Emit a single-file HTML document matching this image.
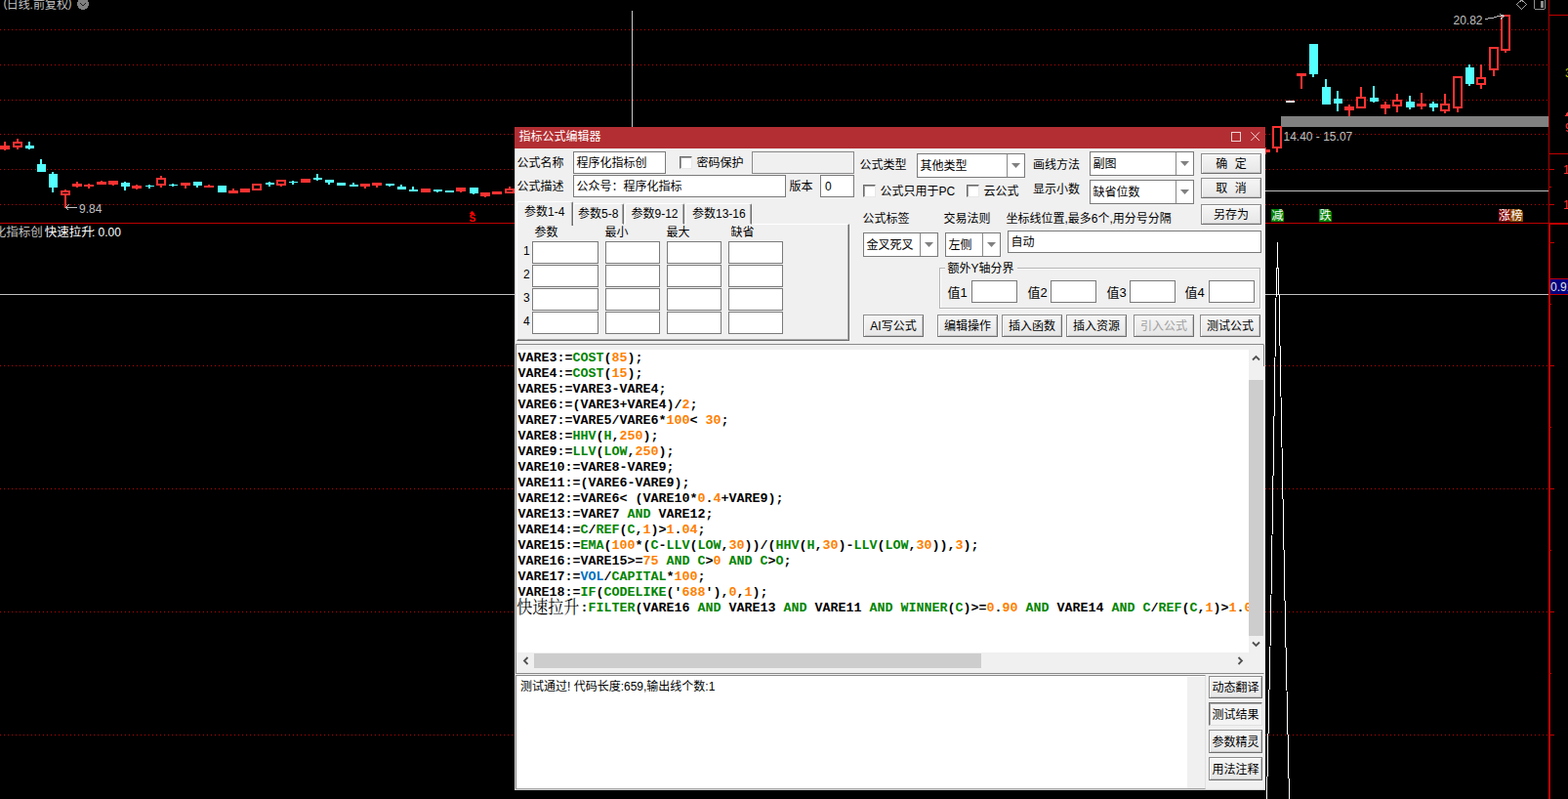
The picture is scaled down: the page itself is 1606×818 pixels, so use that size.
<!DOCTYPE html>
<html><head><meta charset="utf-8"><title>chart</title>
<style>
html,body{margin:0;padding:0;background:#000;}
body{width:1606px;height:818px;overflow:hidden;position:relative;font-family:"Liberation Sans","Noto Sans CJK SC",sans-serif;font-size:12px;color:#000;}
#chart{position:absolute;left:0;top:0;}
#chart text{font-family:"Liberation Sans","Noto Sans CJK SC",sans-serif;}
#dlg{position:absolute;left:527px;top:130px;width:769px;height:679px;background:#f0f0f0;overflow:hidden;box-shadow:inset 1px 0 0 #d0d0d0, inset 0 -1px 0 #d0d0d0;}
#dlg>div,.abs{position:absolute;box-sizing:border-box;}
.l{position:absolute;white-space:nowrap;line-height:12px;font-size:12px;height:12px;}
.g{display:inline-block;width:12px;height:12px;vertical-align:top;fill:currentColor;stroke:currentColor;stroke-width:28;overflow:visible;}
.title{background:#b22e32;}
.in{background:#fff;border:1px solid #7a7a7a;}
.in.dis{background:#f0f0f0;border-color:#8a8a8a;}
.cdiv{position:absolute;top:0;bottom:0;width:1px;background:#8a8a8a;}
.arr{position:absolute;}
.chk{background:#fff;border:1px solid;border-color:#6a6a6a #e8e8e8 #e8e8e8 #6a6a6a;box-shadow:inset 1px 1px 0 #a0a0a0;}
.btn{background:linear-gradient(#f6f6f6,#e6e6e6);border:1px solid;border-color:#8c8c8c #6e6e6e #6e6e6e #8c8c8c;box-shadow:inset 1px 1px 0 #fff,inset -1px -1px 0 #c8c8c8;}
.btn .bl{position:absolute;left:0;right:0;text-align:center;white-space:nowrap;line-height:12px;height:12px;font-size:12px;}
.btn.disb{color:#a0a0a0;}
.btn.pressed{background:#f4f4f4;border-color:#6e6e6e #e0e0e0 #e0e0e0 #6e6e6e;box-shadow:inset 1px 1px 0 #a8a8a8;}
.panel{background:#f0f0f0;border:1px solid;border-color:#fff #6e6e6e #6e6e6e #fff;box-shadow:inset -1px -1px 0 #a8a8a8;}
.tab{background:#f0f0f0;border:1px solid;border-color:#fff #6e6e6e transparent #fff;border-radius:2px 2px 0 0;box-shadow:inset -1px 0 0 #a8a8a8;}
.tab.act{border-bottom:none;z-index:2;}
.grp{border:1px solid #b4b4b4;box-shadow:inset 1px 1px 0 #fff, 1px 1px 0 #fff;}
.edwrap{background:#f0f0f0;border:1px solid;border-color:#8a8a8a #f8f8f8 #8a8a8a #8a8a8a;}
.edit{background:#fff;overflow:hidden;font-family:"Liberation Mono",monospace;font-weight:bold;font-size:13.3333px;letter-spacing:0;}
.cl{height:16px;line-height:16px;white-space:pre;padding-left:1.5px;position:relative;top:0.6px;}
.cl .g{color:#008400}.cl .o{color:#ff8000}.cl .b{color:#0070c0}
.cl span.g,.cl span.o,.cl span.b{display:inline;width:auto;height:auto;vertical-align:baseline;}
.z{letter-spacing:0;display:inline-block;height:16px;vertical-align:top;transform-origin:left bottom;transform:translate(-1.2px,0px) scale(1,1.12);font-family:"Liberation Serif","Noto Serif CJK SC",serif;font-weight:normal;font-size:16px;line-height:16px;}
.sb{background:#f0f0f0;}
.thumb{background:#cdcdcd;}
.outp{background:#fff;border:1px solid;border-color:#8a8a8a #e0e0e0 #a8a8a8 #8a8a8a;}

</style></head>
<body>
<svg id="chart" width="1606" height="818" viewBox="0 0 1606 818" shape-rendering="crispEdges" font-family="Liberation Sans, sans-serif">
<line x1="0" y1="30.5" x2="1586" y2="30.5" stroke="#c00000" stroke-width="1" stroke-dasharray="1 3"/>
<line x1="0" y1="66.5" x2="1586" y2="66.5" stroke="#c00000" stroke-width="1" stroke-dasharray="1 3"/>
<line x1="0" y1="102.5" x2="1586" y2="102.5" stroke="#c00000" stroke-width="1" stroke-dasharray="1 3"/>
<line x1="0" y1="137.5" x2="1586" y2="137.5" stroke="#c00000" stroke-width="1" stroke-dasharray="1 3"/>
<line x1="0" y1="173.5" x2="1586" y2="173.5" stroke="#c00000" stroke-width="1" stroke-dasharray="1 3"/>
<line x1="0" y1="209.5" x2="1586" y2="209.5" stroke="#c00000" stroke-width="1" stroke-dasharray="1 3"/>
<line x1="0" y1="374.5" x2="1586" y2="374.5" stroke="#c00000" stroke-width="1" stroke-dasharray="1 3"/>
<line x1="0" y1="500.5" x2="1586" y2="500.5" stroke="#c00000" stroke-width="1" stroke-dasharray="1 3"/>
<line x1="0" y1="626.5" x2="1586" y2="626.5" stroke="#c00000" stroke-width="1" stroke-dasharray="1 3"/>
<line x1="0" y1="752.5" x2="1586" y2="752.5" stroke="#c00000" stroke-width="1" stroke-dasharray="1 3"/>
<rect x="1312" y="119" width="274" height="11" fill="#808080"/>
<rect x="4" y="145" width="2" height="9" fill="#ff3232"/><rect x="0" y="149" width="10" height="4" fill="#ff3232"/>
<rect x="17" y="142" width="2" height="11" fill="#ff3232"/><rect x="13" y="145" width="10" height="6" fill="#ff3232"/><rect x="15" y="147" width="6" height="2" fill="#000"/>
<rect x="29" y="145" width="2" height="8" fill="#54ffff"/><rect x="26" y="149" width="9" height="3" fill="#54ffff"/>
<rect x="41" y="163" width="2" height="13" fill="#54ffff"/><rect x="38" y="168" width="9" height="8" fill="#54ffff"/>
<rect x="53" y="176" width="2" height="21" fill="#54ffff"/><rect x="50" y="178" width="9" height="14" fill="#54ffff"/>
<rect x="66" y="194" width="2" height="19" fill="#ff3232"/><rect x="62" y="195" width="10" height="5" fill="#ff3232"/><rect x="64" y="197" width="6" height="1" fill="#000"/>
<rect x="78" y="186" width="2" height="6" fill="#ff3232"/><rect x="74" y="188" width="10" height="3" fill="#ff3232"/>
<rect x="90" y="188" width="2" height="5" fill="#ff3232"/><rect x="86" y="189" width="10" height="2" fill="#ff3232"/>
<rect x="103" y="185" width="2" height="4" fill="#ff3232"/><rect x="99" y="186" width="10" height="3" fill="#ff3232"/>
<rect x="115" y="185" width="2" height="5" fill="#ff3232"/><rect x="111" y="185" width="10" height="4" fill="#ff3232"/>
<rect x="127" y="186" width="2" height="9" fill="#54ffff"/><rect x="124" y="187" width="9" height="4" fill="#54ffff"/>
<rect x="139" y="189" width="2" height="5" fill="#ff3232"/><rect x="135" y="190" width="10" height="3" fill="#ff3232"/>
<rect x="152" y="189" width="2" height="4" fill="#54ffff"/><rect x="149" y="190" width="9" height="1" fill="#54ffff"/>
<rect x="164" y="180" width="2" height="12" fill="#ff3232"/><rect x="160" y="182" width="10" height="8" fill="#ff3232"/><rect x="162" y="184" width="6" height="4" fill="#000"/>
<rect x="176" y="188" width="2" height="3" fill="#54ffff"/><rect x="173" y="189" width="9" height="1" fill="#54ffff"/>
<rect x="189" y="187" width="2" height="6" fill="#ff3232"/><rect x="185" y="187" width="10" height="3" fill="#ff3232"/>
<rect x="201" y="186" width="2" height="6" fill="#54ffff"/><rect x="198" y="186" width="9" height="4" fill="#54ffff"/>
<rect x="213" y="189" width="2" height="3" fill="#ff3232"/><rect x="209" y="190" width="10" height="2" fill="#ff3232"/>
<rect x="226" y="190" width="2" height="7" fill="#54ffff"/><rect x="223" y="190" width="9" height="7" fill="#54ffff"/>
<rect x="238" y="193" width="2" height="5" fill="#ff3232"/><rect x="234" y="195" width="10" height="3" fill="#ff3232"/>
<rect x="250" y="193" width="2" height="4" fill="#ff3232"/><rect x="246" y="193" width="10" height="4" fill="#ff3232"/>
<rect x="262" y="188" width="2" height="7" fill="#ff3232"/><rect x="258" y="188" width="10" height="7" fill="#ff3232"/><rect x="260" y="190" width="6" height="3" fill="#000"/>
<rect x="275" y="186" width="2" height="5" fill="#54ffff"/><rect x="272" y="187" width="9" height="2" fill="#54ffff"/>
<rect x="287" y="184" width="2" height="7" fill="#ff3232"/><rect x="283" y="184" width="10" height="6" fill="#ff3232"/><rect x="285" y="186" width="6" height="2" fill="#000"/>
<rect x="299" y="185" width="2" height="4" fill="#54ffff"/><rect x="296" y="186" width="9" height="1" fill="#54ffff"/>
<rect x="312" y="183" width="2" height="4" fill="#ff3232"/><rect x="308" y="183" width="10" height="4" fill="#ff3232"/>
<rect x="324" y="178" width="2" height="7" fill="#54ffff"/><rect x="321" y="182" width="9" height="2" fill="#54ffff"/>
<rect x="336" y="184" width="2" height="5" fill="#54ffff"/><rect x="333" y="184" width="9" height="3" fill="#54ffff"/>
<rect x="348" y="187" width="2" height="3" fill="#54ffff"/><rect x="345" y="187" width="9" height="3" fill="#54ffff"/>
<rect x="361" y="187" width="2" height="4" fill="#54ffff"/><rect x="358" y="189" width="9" height="2" fill="#54ffff"/>
<rect x="373" y="188" width="2" height="5" fill="#ff3232"/><rect x="369" y="188" width="10" height="3" fill="#ff3232"/>
<rect x="385" y="187" width="2" height="5" fill="#ff3232"/><rect x="381" y="187" width="10" height="3" fill="#ff3232"/>
<rect x="398" y="188" width="2" height="3" fill="#54ffff"/><rect x="395" y="188" width="9" height="2" fill="#54ffff"/>
<rect x="410" y="189" width="2" height="5" fill="#54ffff"/><rect x="407" y="191" width="9" height="3" fill="#54ffff"/>
<rect x="422" y="191" width="2" height="5" fill="#54ffff"/><rect x="419" y="194" width="9" height="2" fill="#54ffff"/>
<rect x="435" y="193" width="2" height="4" fill="#ff3232"/><rect x="431" y="193" width="10" height="4" fill="#ff3232"/>
<rect x="447" y="194" width="2" height="3" fill="#54ffff"/><rect x="444" y="194" width="9" height="2" fill="#54ffff"/>
<rect x="459" y="195" width="2" height="2" fill="#54ffff"/><rect x="456" y="195" width="9" height="2" fill="#54ffff"/>
<rect x="471" y="192" width="2" height="5" fill="#ff3232"/><rect x="467" y="192" width="10" height="4" fill="#ff3232"/>
<rect x="484" y="192" width="2" height="7" fill="#54ffff"/><rect x="481" y="192" width="9" height="6" fill="#54ffff"/>
<rect x="496" y="197" width="2" height="5" fill="#ff3232"/><rect x="492" y="197" width="10" height="4" fill="#ff3232"/>
<rect x="508" y="196" width="2" height="3" fill="#ff3232"/><rect x="504" y="196" width="10" height="3" fill="#ff3232"/>
<rect x="521" y="191" width="2" height="7" fill="#ff3232"/><rect x="517" y="193" width="10" height="5" fill="#ff3232"/><rect x="519" y="195" width="6" height="1" fill="#000"/>
<rect x="1295" y="151" width="2" height="7" fill="#ff3232"/><rect x="1291" y="153" width="10" height="3" fill="#ff3232"/>
<rect x="1307" y="129" width="2" height="27" fill="#ff3232"/><rect x="1303" y="129" width="10" height="23" fill="#ff3232"/><rect x="1305" y="131" width="6" height="19" fill="#000"/>
<rect x="1332" y="75" width="2" height="16" fill="#ff3232"/><rect x="1328" y="75" width="10" height="3" fill="#ff3232"/>
<rect x="1344" y="45" width="2" height="34" fill="#54ffff"/><rect x="1341" y="45" width="9" height="31" fill="#54ffff"/>
<rect x="1357" y="81" width="2" height="26" fill="#54ffff"/><rect x="1354" y="89" width="9" height="18" fill="#54ffff"/>
<rect x="1369" y="93" width="2" height="21" fill="#54ffff"/><rect x="1366" y="101" width="9" height="5" fill="#54ffff"/>
<rect x="1381" y="107" width="2" height="12" fill="#ff3232"/><rect x="1377" y="109" width="10" height="4" fill="#ff3232"/>
<rect x="1393" y="89" width="2" height="22" fill="#ff3232"/><rect x="1389" y="99" width="10" height="12" fill="#ff3232"/><rect x="1391" y="101" width="6" height="8" fill="#000"/>
<rect x="1406" y="88" width="2" height="17" fill="#54ffff"/><rect x="1403" y="100" width="9" height="4" fill="#54ffff"/>
<rect x="1418" y="104" width="2" height="13" fill="#ff3232"/><rect x="1414" y="107" width="10" height="4" fill="#ff3232"/>
<rect x="1430" y="96" width="2" height="19" fill="#ff3232"/><rect x="1426" y="102" width="10" height="7" fill="#ff3232"/><rect x="1428" y="104" width="6" height="3" fill="#000"/>
<rect x="1443" y="98" width="2" height="14" fill="#54ffff"/><rect x="1440" y="104" width="9" height="6" fill="#54ffff"/>
<rect x="1455" y="95" width="2" height="17" fill="#ff3232"/><rect x="1451" y="106" width="10" height="3" fill="#ff3232"/>
<rect x="1467" y="104" width="2" height="10" fill="#54ffff"/><rect x="1464" y="106" width="9" height="4" fill="#54ffff"/>
<rect x="1479" y="96" width="2" height="20" fill="#ff3232"/><rect x="1475" y="106" width="10" height="8" fill="#ff3232"/><rect x="1477" y="108" width="6" height="4" fill="#000"/>
<rect x="1492" y="78" width="2" height="37" fill="#ff3232"/><rect x="1488" y="78" width="10" height="33" fill="#ff3232"/><rect x="1490" y="80" width="6" height="29" fill="#000"/>
<rect x="1504" y="66" width="2" height="22" fill="#54ffff"/><rect x="1501" y="69" width="9" height="17" fill="#54ffff"/>
<rect x="1516" y="66" width="2" height="25" fill="#ff3232"/><rect x="1512" y="79" width="10" height="8" fill="#ff3232"/><rect x="1514" y="81" width="6" height="4" fill="#000"/>
<rect x="1529" y="48" width="2" height="30" fill="#ff3232"/><rect x="1525" y="48" width="10" height="24" fill="#ff3232"/><rect x="1527" y="50" width="6" height="20" fill="#000"/>
<rect x="1541" y="15" width="2" height="39" fill="#ff3232"/><rect x="1537" y="15" width="10" height="37" fill="#ff3232"/><rect x="1539" y="17" width="6" height="33" fill="#000"/>
<rect x="1317" y="103" width="9" height="2" fill="#fff"/>
<rect x="0" y="228" width="1587" height="1" fill="#c00000"/>
<rect x="0" y="301" width="1586" height="1" fill="#c0c0c0"/>
<rect x="1296" y="195" width="290" height="1" fill="#c0c0c0"/>
<rect x="647" y="11" width="1" height="120" fill="#c8c8c8"/>
<rect x="1586" y="0" width="1" height="228" fill="#b00000"/>
<rect x="1586" y="228" width="2" height="590" fill="#c00000"/>
<rect x="1587" y="15" width="19" height="1" fill="#c00000"/>
<rect x="1587" y="157" width="19" height="1" fill="#c00000"/>
<rect x="1587" y="228" width="19" height="2" fill="#c00000"/>
<rect x="1587" y="173" width="5" height="1" fill="#c00000"/>
<rect x="1587" y="209" width="5" height="1" fill="#c00000"/>
<rect x="1587" y="191" width="2" height="1" fill="#c00000"/>
<rect x="1588" y="248" width="4" height="1" fill="#c00000"/>
<rect x="1588" y="374" width="4" height="1" fill="#c00000"/>
<rect x="1588" y="500" width="4" height="1" fill="#c00000"/>
<rect x="1588" y="626" width="4" height="1" fill="#c00000"/>
<rect x="1588" y="752" width="4" height="1" fill="#c00000"/>
<rect x="1588" y="311" width="1" height="1" fill="#c00000"/>
<rect x="1588" y="437" width="1" height="1" fill="#c00000"/>
<rect x="1588" y="563" width="1" height="1" fill="#c00000"/>
<rect x="1588" y="689" width="1" height="1" fill="#c00000"/>
<rect x="1588" y="286" width="18" height="15" fill="#000080"/>
<rect x="1588" y="285" width="18" height="1" fill="#c00000"/><rect x="1588" y="301" width="18" height="1" fill="#c00000"/>
<text x="1588" y="298" font-size="12" fill="#e0e0e0">0.91</text>
<text x="1601" y="178" font-size="12" fill="#ff3232">1</text>
<text x="1601" y="214" font-size="12" fill="#ff3232">1</text>
<text x="1603" y="79" font-size="12" fill="#c0c000">3</text>
<text x="1603" y="135" font-size="12" fill="#ff3232">9</text>
<path d="M1603 119 L1606 114 L1606 119Z" fill="#ff3232"/>
<polyline points="1308.5,248 1308.5,274 1307.5,275 1301.5,640 1297.5,818" fill="none" stroke="#fff" stroke-width="1"/>
<polyline points="1308.5,274 1309.5,275 1316.5,640 1320.5,818" fill="none" stroke="#fff" stroke-width="1"/>
<text x="81" y="218" font-size="12" fill="#c0c0c0">9.84</text>
<path d="M67.5 212.5 H79 M67.5 212.5 l3 -3 M67.5 212.5 l3 3" stroke="#c0c0c0" stroke-width="1" fill="none"/>
<text x="1488.5" y="25" font-size="12" fill="#c0c0c0">20.82</text>
<path d="M1521 19.5 L1528 18.5 L1535 16.5 L1541 16.5 M1541 16.5 l-5 -2 M1541 16.5 l-4 3" stroke="#c0c0c0" stroke-width="1" fill="none"/>
<text x="1314.5" y="144" font-size="12" fill="#c0c0c0">14.40 - 15.07</text>
<text x="94" y="242" font-size="12" fill="#fff">:</text>
<text x="100.5" y="242" font-size="12" fill="#fff">0.00</text>
<text x="480.5" y="227" font-size="10" font-weight="bold" fill="#ff0000">S</text>
<path d="M480.7 219 L483.5 215.7 L486.3 219z" fill="#ff0000" shape-rendering="geometricPrecision"/>
<path d="M1558.5 0 L1563.5 4.5 L1558.5 9.5 L1553.5 4.5Z" fill="none" stroke="#a0a0a0" stroke-width="1"/>
<rect x="1571.5" y="-2.5" width="11" height="12" rx="2" fill="none" stroke="#909090" stroke-width="1"/>
<rect x="1578" y="1" width="3" height="7" fill="#909090"/>
<circle cx="85" cy="4" r="6" fill="#808080"/><path d="M82 3 l3 3 l3 -3" fill="none" stroke="#202020" stroke-width="1.2"/>
<rect x="1302" y="214" width="13" height="13" fill="#008000"/>
<rect x="1351" y="214" width="13" height="13" fill="#008000"/>
<rect x="1535" y="214" width="12" height="13" fill="#800000"/>
<rect x="1547" y="214" width="13" height="13" fill="#8c4a00"/>
<path d="M1312 214 H1315 V217Z" fill="#000" shape-rendering="geometricPrecision"/>
<path d="M1361 214 H1364 V217Z" fill="#000" shape-rendering="geometricPrecision"/>
<path d="M1557 214 H1560 V217Z" fill="#000" shape-rendering="geometricPrecision"/>
<g shape-rendering="geometricPrecision"><text x="6.7" y="8.56" font-size="12" fill="#c0c0c0">日线</text><text x="34" y="8.56" font-size="12" fill="#c0c0c0">前复权</text><text x="-6.3" y="241.5" font-size="12.5" fill="#c0c0c0">化指标创</text><text x="45.7" y="241.5" font-size="12.5" fill="#ffffff">快速拉升</text><text x="1302.5" y="225.06" font-size="12" fill="#ffffff">减</text><text x="1351.5" y="225.06" font-size="12" fill="#ffffff">跌</text><text x="1535" y="225.06" font-size="12" fill="#ffffff">涨</text><text x="1547.5" y="225.06" font-size="12" fill="#ffffff">榜</text><text x="3.5" y="7" font-size="12" fill="#c0c0c0">(</text><text x="30.5" y="9" font-size="12" fill="#c0c0c0">.</text><text x="69.5" y="7" font-size="12" fill="#c0c0c0">)</text></g>
</svg>
<div id="dlg">
<div class="title" style="left:0px;top:0px;width:769px;height:22px;"></div>
<div class="l " style="left:4.5px;top:3.9000000000000057px;color:#fff">指标公式编辑器</div>
<svg class="abs" style="left:734px;top:5px" width="11" height="11"><rect x="0.5" y="0.5" width="9" height="9" fill="none" stroke="#f0d4d4"/></svg>
<svg class="abs" style="left:754px;top:5px" width="11" height="11"><path d="M0.3 0.3L9 9M9 0.3L0.3 9" stroke="#f0d4d4" stroke-width="1" fill="none"/></svg>
<div class="l " style="left:2.5px;top:30.5px;">公式名称</div>
<div class="in" style="left:60px;top:25px;width:95px;height:23px;"><div class="l" style="left:2.5px;top:4.5px">程序化指标创</div></div>
<div class="chk" style="left:169px;top:30px;width:13px;height:13px;"></div>
<div class="l " style="left:186.5px;top:30.5px;">密码保护</div>
<div class="in dis" style="left:243px;top:25px;width:105px;height:23px;"></div>
<div class="l " style="left:2.5px;top:54.5px;">公式描述</div>
<div class="in" style="left:60px;top:49px;width:218px;height:23px;"><div class="l" style="left:2.5px;top:4.5px">公众号：程序化指标</div></div>
<div class="l " style="left:281.5px;top:54.5px;">版本</div>
<div class="in" style="left:313px;top:49px;width:35px;height:23px;"><div class="l" style="left:4.0px;top:4.5px">0</div></div>
<div class="panel" style="left:2px;top:99px;width:341px;height:120px;"></div>
<div class="tab act" style="left:2px;top:76px;width:58px;height:25px;"><div class="l" style="left:7px;top:3.7px">参数1-4</div></div>
<div class="tab" style="left:60px;top:78px;width:52px;height:22px;"><div class="l" style="left:4px;top:3.7px">参数5-8</div></div>
<div class="tab" style="left:113px;top:78px;width:61px;height:22px;"><div class="l" style="left:5.5px;top:3.7px">参数9-12</div></div>
<div class="tab" style="left:175px;top:78px;width:68px;height:22px;"><div class="l" style="left:6px;top:3.7px">参数13-16</div></div>
<div class="l " style="left:20.5px;top:101.5px;">参数</div>
<div class="l " style="left:92.5px;top:101.5px;">最小</div>
<div class="l " style="left:155.5px;top:101.5px;">最大</div>
<div class="l " style="left:221.5px;top:101.5px;">缺省</div>
<div class="l " style="left:9.0px;top:121.0px;">1</div>
<div class="in" style="left:18px;top:117px;width:68px;height:23px;"></div>
<div class="in" style="left:93px;top:117px;width:56px;height:23px;"></div>
<div class="in" style="left:156px;top:117px;width:56px;height:23px;"></div>
<div class="in" style="left:219px;top:117px;width:56px;height:23px;"></div>
<div class="l " style="left:9.0px;top:145.0px;">2</div>
<div class="in" style="left:18px;top:141px;width:68px;height:23px;"></div>
<div class="in" style="left:93px;top:141px;width:56px;height:23px;"></div>
<div class="in" style="left:156px;top:141px;width:56px;height:23px;"></div>
<div class="in" style="left:219px;top:141px;width:56px;height:23px;"></div>
<div class="l " style="left:9.0px;top:169.0px;">3</div>
<div class="in" style="left:18px;top:165px;width:68px;height:23px;"></div>
<div class="in" style="left:93px;top:165px;width:56px;height:23px;"></div>
<div class="in" style="left:156px;top:165px;width:56px;height:23px;"></div>
<div class="in" style="left:219px;top:165px;width:56px;height:23px;"></div>
<div class="l " style="left:9.0px;top:193.0px;">4</div>
<div class="in" style="left:18px;top:189px;width:68px;height:23px;"></div>
<div class="in" style="left:93px;top:189px;width:56px;height:23px;"></div>
<div class="in" style="left:156px;top:189px;width:56px;height:23px;"></div>
<div class="in" style="left:219px;top:189px;width:56px;height:23px;"></div>
<div class="l " style="left:353.5px;top:32.5px;">公式类型</div>
<div class="in" style="left:412px;top:27px;width:111px;height:25px;"><div class="l" style="left:2.5px;top:5.5px">其他类型</div><div class="cdiv" style="left:91px"></div><svg class="arr" style="left:96.0px;top:9.0px" width="9" height="5" viewBox="0 0 9 5"><path d="M0 0H9L4.5 5Z" fill="#808080"/></svg></div>
<div class="l " style="left:531.0px;top:32.5px;">画线方法</div>
<div class="in" style="left:589px;top:25px;width:107px;height:25px;"><div class="l" style="left:2.5px;top:5.5px">副图</div><div class="cdiv" style="left:87px"></div><svg class="arr" style="left:92.0px;top:9.0px" width="9" height="5" viewBox="0 0 9 5"><path d="M0 0H9L4.5 5Z" fill="#808080"/></svg></div>
<div class="btn " style="left:703px;top:27px;width:62px;height:21px;"><div class="bl" style="top:3.5px">确<span style="display:inline-block;width:7.5px"></span>定</div></div>
<div class="chk" style="left:357px;top:59px;width:13px;height:13px;"></div>
<div class="l " style="left:374.5px;top:59.5px;">公式只用于PC</div>
<div class="chk" style="left:463px;top:59px;width:13px;height:13px;"></div>
<div class="l " style="left:480.5px;top:59.5px;">云公式</div>
<div class="l " style="left:531.0px;top:57.5px;">显示小数</div>
<div class="in" style="left:589px;top:54px;width:107px;height:25px;"><div class="l" style="left:2.5px;top:5.5px">缺省位数</div><div class="cdiv" style="left:87px"></div><svg class="arr" style="left:92.0px;top:9.0px" width="9" height="5" viewBox="0 0 9 5"><path d="M0 0H9L4.5 5Z" fill="#808080"/></svg></div>
<div class="btn " style="left:703px;top:52px;width:62px;height:21px;"><div class="bl" style="top:3.5px">取<span style="display:inline-block;width:7.5px"></span>消</div></div>
<div class="btn " style="left:703px;top:79px;width:62px;height:21px;"><div class="bl" style="top:3.5px">另存为</div></div>
<div class="l " style="left:356.5px;top:87.5px;">公式标签</div>
<div class="l " style="left:439.5px;top:87.5px;">交易法则</div>
<div class="l " style="left:503.5px;top:87.5px;">坐标线位置,最多6个,用分号分隔</div>
<div class="in" style="left:357px;top:108px;width:77px;height:25px;"><div class="l" style="left:2.5px;top:5.5px">金叉死叉</div><div class="cdiv" style="left:57px"></div><svg class="arr" style="left:62.0px;top:9.0px" width="9" height="5" viewBox="0 0 9 5"><path d="M0 0H9L4.5 5Z" fill="#808080"/></svg></div>
<div class="in" style="left:441px;top:108px;width:57px;height:25px;"><div class="l" style="left:2.5px;top:5.5px">左侧</div><div class="cdiv" style="left:37px"></div><svg class="arr" style="left:42.0px;top:9.0px" width="9" height="5" viewBox="0 0 9 5"><path d="M0 0H9L4.5 5Z" fill="#808080"/></svg></div>
<div class="in" style="left:505px;top:106px;width:260px;height:23px;"><div class="l" style="left:2.5px;top:4.5px">自动</div></div>
<div class="grp" style="left:435px;top:144px;width:329px;height:42px;"></div>
<div class="l " style="left:440.5px;top:138.5px;background:#f0f0f0;padding:0 3px">额外Y轴分界</div>
<div class="l " style="left:443.5px;top:164.10000000000002px;font-size:13px">值1</div>
<div class="in" style="left:468px;top:157px;width:47px;height:23px;"></div>
<div class="l " style="left:525.5px;top:164.10000000000002px;font-size:13px">值2</div>
<div class="in" style="left:549px;top:157px;width:47px;height:23px;"></div>
<div class="l " style="left:606.5px;top:164.10000000000002px;font-size:13px">值3</div>
<div class="in" style="left:630px;top:157px;width:47px;height:23px;"></div>
<div class="l " style="left:686.5px;top:164.10000000000002px;font-size:13px">值4</div>
<div class="in" style="left:711px;top:157px;width:47px;height:23px;"></div>
<div class="btn " style="left:357px;top:192px;width:62px;height:23px;"><div class="bl" style="top:4.5px">AI写公式</div></div>
<div class="btn " style="left:433px;top:192px;width:62px;height:23px;"><div class="bl" style="top:4.5px">编辑操作</div></div>
<div class="btn " style="left:499px;top:192px;width:62px;height:23px;"><div class="bl" style="top:4.5px">插入函数</div></div>
<div class="btn " style="left:565px;top:192px;width:62px;height:23px;"><div class="bl" style="top:4.5px">插入资源</div></div>
<div class="btn disb" style="left:634px;top:192px;width:62px;height:23px;"><div class="bl" style="top:4.5px">引入公式</div></div>
<div class="btn " style="left:702px;top:192px;width:62px;height:23px;"><div class="bl" style="top:4.5px">测试公式</div></div>
<div class="edwrap" style="left:1px;top:222px;width:767px;height:338px;"></div>
<div class="edit" style="left:2px;top:228px;width:750px;height:310px;"><div class="cl">VARE3:=<span class="g">COST</span>(<span class="o">85</span>);</div><div class="cl">VARE4:=<span class="g">COST</span>(<span class="o">15</span>);</div><div class="cl">VARE5:=VARE3-VARE4;</div><div class="cl">VARE6:=(VARE3+VARE4)/<span class="o">2</span>;</div><div class="cl">VARE7:=VARE5/VARE6*<span class="o">100</span>&lt; <span class="o">30</span>;</div><div class="cl">VARE8:=<span class="g">HHV</span>(<span class="g">H</span>,<span class="o">250</span>);</div><div class="cl">VARE9:=<span class="g">LLV</span>(<span class="g">LOW</span>,<span class="o">250</span>);</div><div class="cl">VARE10:=VARE8-VARE9;</div><div class="cl">VARE11:=(VARE6-VARE9);</div><div class="cl">VARE12:=VARE6&lt; (VARE10*<span class="o">0</span>.<span class="o">4</span>+VARE9);</div><div class="cl">VARE13:=VARE7 <span class="g">AND</span> VARE12;</div><div class="cl">VARE14:=<span class="g">C</span>/<span class="g">REF</span>(<span class="g">C</span>,<span class="o">1</span>)&gt;<span class="o">1</span>.<span class="o">04</span>;</div><div class="cl">VARE15:=<span class="g">EMA</span>(<span class="o">100</span>*(<span class="g">C</span>-<span class="g">LLV</span>(<span class="g">LOW</span>,<span class="o">30</span>))/(<span class="g">HHV</span>(<span class="g">H</span>,<span class="o">30</span>)-<span class="g">LLV</span>(<span class="g">LOW</span>,<span class="o">30</span>)),<span class="o">3</span>);</div><div class="cl">VARE16:=VARE15&gt;=<span class="o">75</span> <span class="g">AND</span> <span class="g">C</span>&gt;<span class="o">0</span> <span class="g">AND</span> <span class="g">C</span>&gt;<span class="g">O</span>;</div><div class="cl">VARE17:=<span class="b">VOL</span>/<span class="g">CAPITAL</span>*<span class="o">100</span>;</div><div class="cl">VARE18:=<span class="g">IF</span>(<span class="g">CODELIKE</span>(&#x27;<span class="o">688</span>&#x27;),<span class="o">0</span>,<span class="o">1</span>);</div><div class="cl"><span class="z">快速拉升</span>:<span class="g">FILTER</span>(VARE16 <span class="g">AND</span> VARE13 <span class="g">AND</span> VARE11 <span class="g">AND</span> <span class="g">WINNER</span>(<span class="g">C</span>)&gt;=<span class="o">0</span>.<span class="o">90</span> <span class="g">AND</span> VARE14 <span class="g">AND</span> <span class="g">C</span>/<span class="g">REF</span>(<span class="g">C</span>,<span class="o">1</span>)&gt;<span class="o">1</span>.<span class="o">0</span></div></div>
<div class="sb" style="left:752px;top:224px;width:15px;height:314px;"></div>
<div class="thumb" style="left:752px;top:259px;width:15px;height:262px;"></div>
<svg class="abs" style="left:755px;top:233px" width="9" height="7" viewBox="0 0 9 7"><path d="M1 5.5L4.5 2L8 5.5" fill="none" stroke="#505050" stroke-width="1.8"/></svg>
<svg class="abs" style="left:755px;top:526px" width="9" height="7" viewBox="0 0 9 7"><path d="M1 1.5L4.5 5L8 1.5" fill="none" stroke="#505050" stroke-width="1.8"/></svg>
<div class="sb" style="left:767px;top:223px;width:1px;height:22px;background:#8a8a8a"></div>
<div class="sb" style="left:2px;top:538px;width:750px;height:21px;"></div>
<div class="thumb" style="left:20px;top:539px;width:458px;height:15px;"></div>
<svg class="abs" style="left:8px;top:542px" width="7" height="9" viewBox="0 0 7 9"><path d="M5.5 1L2 4.5L5.5 8" fill="none" stroke="#505050" stroke-width="1.8"/></svg>
<svg class="abs" style="left:740px;top:542px" width="7" height="9" viewBox="0 0 7 9"><path d="M1.5 1L5 4.5L1.5 8" fill="none" stroke="#505050" stroke-width="1.8"/></svg>
<div class="outp" style="left:1px;top:561px;width:707px;height:117px;"></div>
<div class="sb" style="left:689px;top:563px;width:18px;height:114px;"></div>
<div class="l " style="left:6.0px;top:566.5px;">测试通过! 代码长度:659,输出线个数:1</div>
<div class="btn " style="left:711px;top:562px;width:55px;height:23px;"><div class="bl" style="top:4.5px">动态翻译</div></div>
<div class="btn pressed" style="left:711px;top:589px;width:55px;height:24px;"><div class="bl" style="top:5.5px">测试结果</div></div>
<div class="btn " style="left:711px;top:617px;width:55px;height:24px;"><div class="bl" style="top:5.5px">参数精灵</div></div>
<div class="btn " style="left:711px;top:645px;width:55px;height:24px;"><div class="bl" style="top:5.5px">用法注释</div></div>
</div>
</body></html>
